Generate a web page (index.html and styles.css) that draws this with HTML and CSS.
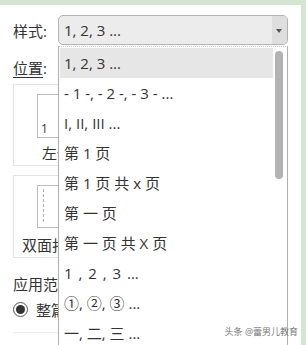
FILE: index.html
```html
<!DOCTYPE html>
<html lang="zh">
<head>
    <meta charset="UTF-8">
    <title>页码</title>
    <link rel="stylesheet" href="styles.css">
</head>
<body>

<div class="frame">
    <div class="panel">
        <div class="field-row">
            <span class="label">样式:</span>
            <div class="select">
                <span class="select-value">1, 2, 3 ...</span>
                <span class="select-arrow"></span>
            </div>
        </div>
        <div class="field-row position-row">
            <span class="label"><u>位置</u>:</span>
        </div>

        <div class="option-card">
            <div class="page-thumb">
                <span class="page-num">1</span>
            </div>
            <div class="card-caption">左侧</div>
        </div>

        <div class="option-card second">
            <div class="page-thumb dashed">
                <span class="dash-line"></span>
            </div>
            <div class="card-caption">双面打印</div>
        </div>

        <div class="scope-label">应用范围</div>
        <div class="radio-row">
            <span class="radio"></span>
            <span class="radio-text">整篇文档</span>
        </div>
        <div class="divider"></div>

        <div class="dropdown">
            <ul class="dropdown-items">
                <li class="active">1, 2, 3 ...</li>
                <li>- 1 -, - 2 -, - 3 - ...</li>
                <li>I, II, III ...</li>
                <li>第 1 页</li>
                <li>第 1 页 共 x 页</li>
                <li>第 一 页</li>
                <li>第 一 页 共 X 页</li>
                <li class="wide">1 , 2 , 3 ...</li>
                <li>①, ②, ③ ...</li>
                <li>一, 二, 三 ...</li>
            </ul>
            <div class="scroll-track">
                <div class="scroll-thumb"></div>
            </div>
        </div>

        <div class="watermark">头条 @蕾男儿教育</div>
    </div>
</div>

</body>
</html>
```

FILE: styles.css
```css
* {
    box-sizing: border-box;
}

body {
    margin: 0;
    background: #d3e6d1;
    font-family: "Open Sans", "Noto Sans CJK SC", sans-serif;
    font-size: 15px;
    color: #333;
}

.frame {
    width: 306px;
    height: 345px;
    padding-top: 5px;
    overflow: hidden;
}

.panel {
    position: relative;
    width: 301px;
    height: 340px;
    background: #fff;
    padding: 10px 0 0 13px;
}

.field-row {
    display: flex;
    align-items: center;
    height: 30px;
}

.label {
    width: 45px;
    flex-shrink: 0;
}

.label u {
    text-decoration-thickness: 1px;
    text-underline-offset: 3px;
}

.select {
    position: relative;
    width: 230px;
    height: 30px;
    border: 1px solid #b3b3b3;
    border-radius: 5px;
    background: #ececec;
    display: flex;
    align-items: center;
    padding-left: 5px;
}

.select-arrow {
    position: absolute;
    right: 0;
    top: 0;
    width: 15px;
    height: 28px;
    background: #dedede;
    border-radius: 0 4px 4px 0;
}

.select-arrow::after {
    content: "";
    position: absolute;
    left: 4px;
    top: 13px;
    border-left: 3px solid transparent;
    border-right: 3px solid transparent;
    border-top: 4px solid #555;
}

.position-row {
    margin-top: 12px;
    height: 20px;
}

.option-card {
    width: 90px;
    height: 82px;
    margin-top: 7px;
    border: 1px solid #e3e3e3;
    padding: 9px 0 0 23px;
}

.option-card.second {
    margin-top: 9px;
    height: 83px;
}

.page-thumb {
    position: relative;
    width: 40px;
    height: 44px;
    border: 1px solid #bdbdbd;
}

.page-num {
    position: absolute;
    left: 3px;
    bottom: 1px;
    font-size: 12px;
    line-height: 14px;
    color: #333;
}

.page-thumb.dashed {
    height: 43px;
}

.dash-line {
    position: absolute;
    left: 5px;
    top: 3px;
    height: 33px;
    border-left: 1px dashed #b5b5b5;
}

.card-caption {
    margin-top: 5px;
    margin-left: 5px;
    line-height: 20px;
    white-space: nowrap;
}

.second .card-caption {
    margin-top: 7px;
    margin-left: -15px;
}

.scope-label {
    margin-top: 16px;
    height: 20px;
    line-height: 20px;
}

.radio-row {
    display: flex;
    align-items: center;
    gap: 8px;
    margin-top: 5px;
    height: 20px;
}

.radio {
    width: 15px;
    height: 15px;
    border: 1px solid #555;
    border-radius: 50%;
    display: flex;
    align-items: center;
    justify-content: center;
}

.radio::after {
    content: "";
    width: 9px;
    height: 9px;
    border-radius: 50%;
    background: #333;
}

.divider {
    margin-top: 13px;
    width: 60px;
    border-top: 1px solid #ececec;
}

.dropdown {
    position: absolute;
    left: 58px;
    top: 41px;
    width: 230px;
    height: 310px;
    background: #fff;
    border-left: 1px solid #b0b0b0;
    border-right: 1px solid #b0b0b0;
    border-top: 1px dotted #c8c8c8;
    display: flex;
    padding: 1px 0 0 1px;
}

.dropdown-items {
    list-style: none;
    margin: 0;
    padding: 0;
    flex: 1;
}

.dropdown-items li {
    height: 30px;
    line-height: 30px;
    padding-left: 4px;
    white-space: nowrap;
}

.dropdown-items li.active {
    background: #e6e6e6;
}

.dropdown-items li.wide {
    word-spacing: 2px;
}

.scroll-track {
    width: 14px;
    padding: 3px 3px 0 2px;
}

.scroll-thumb {
    width: 8px;
    height: 128px;
    background: #b3b3b3;
    border-radius: 4px;
}

.watermark {
    position: absolute;
    right: 3px;
    bottom: 7px;
    font-size: 9px;
    color: #777;
}
```
